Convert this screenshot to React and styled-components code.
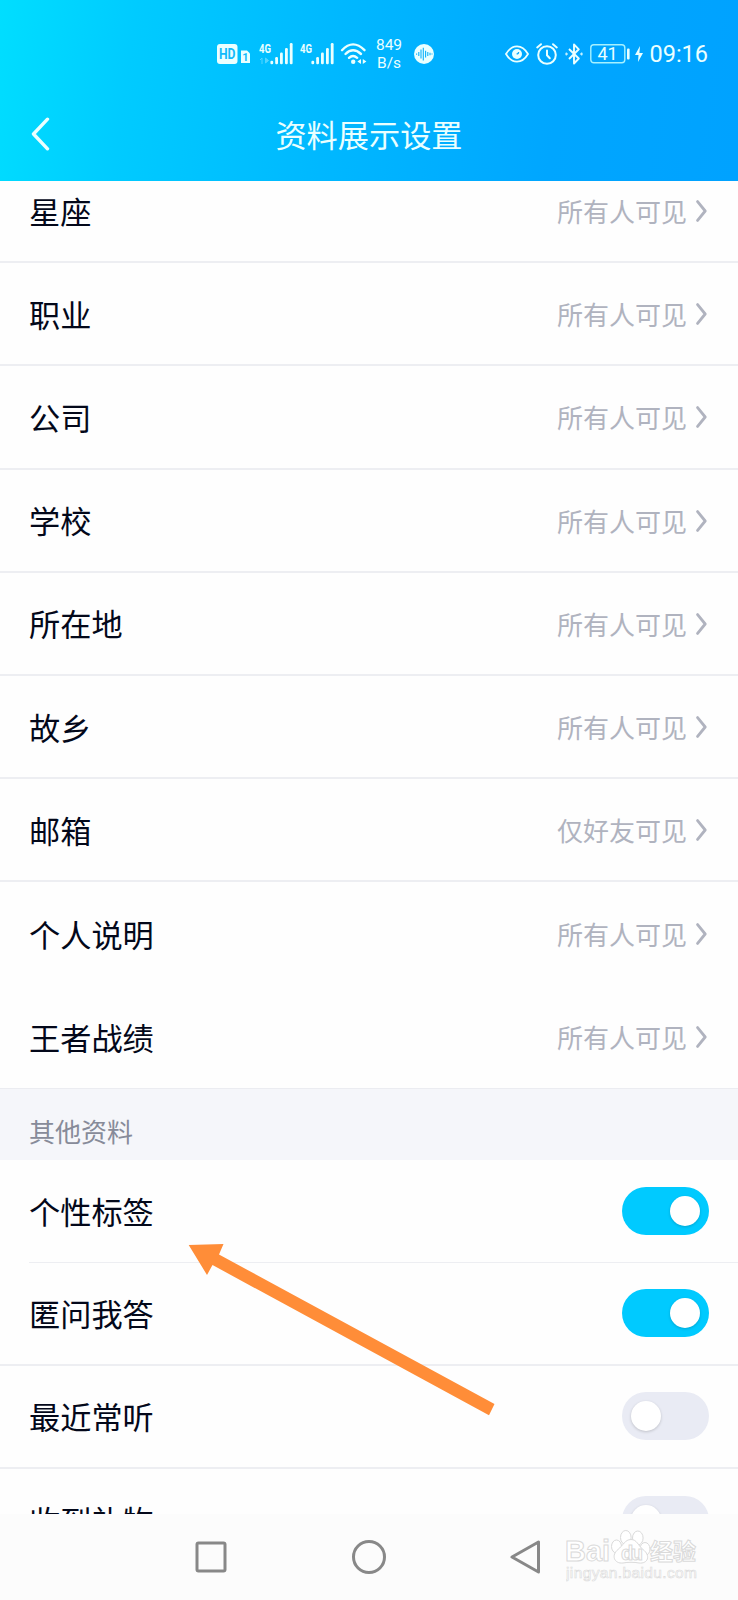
import styled, { createGlobalStyle } from "styled-components"

const GlobalStyle = createGlobalStyle`
*{
    box-sizing:border-box;
}
body{
    margin:0;
    background-color:#FEFEFE;
    font-family: "Noto Sans CJK SC", sans-serif;
}
`

const Screen = styled.div`
position:relative;
display:flex;
flex-direction:column;
width:738px;
height:1600px;
overflow:hidden;
`

const Header = styled.header`
flex:none;
height:180.5px;
color:#EAFFFF;
background: linear-gradient(98deg, #00DEFF 0%, #00CBFF 18%, #00B8FF 45%, #00A6FF 75%, #00A2FF 100%);
`

const StatusBar = styled.div`
display:flex;
justify-content:space-between;
align-items:center;
height:107px;
padding:0 30px 0 217px;
font-family: Roboto, sans-serif;
`

const StatusGroup = styled.div`
display:flex;
align-items:center;
gap:${({ $gap }) => $gap || 0}px;
& svg{
    display:block;
    overflow:visible;
}
`

const Speed = styled.div`
width:28px;
margin:0 11px 0 8px;
font-size:15.5px;
line-height:18px;
text-align:center;
`

const Clock = styled.span`
margin-left:-2px;
font-size:23.5px;
line-height:28px;
`

const TitleBar = styled.div`
display:grid;
grid-template-columns:90px 1fr 90px;
align-items:center;
height:54px;
`

const BackButton = styled.button`
display:flex;
padding:0 0 0 30px;
border:none;
background:none;
color:inherit;
`

const Title = styled.h1`
margin:0;
font-size:31.2px;
font-weight:400;
line-height:46px;
text-align:center;
`

const List = styled.main`
flex:1;
min-height:0;
overflow:hidden;
`

const Scrolled = styled.div`
margin-top:-20.5px;
`

const Row = styled.div`
display:flex;
justify-content:space-between;
align-items:center;
height:${({ $h }) => $h || 103.2}px;
margin-left:${({ $inset }) => ($inset ? 29 : 0)}px;
padding:0 29px 0 ${({ $inset }) => ($inset ? 0 : 29)}px;
border-bottom:${({ $line }) => $line || 0}px solid #EDEEF2;
`

const Label = styled.span`
font-size:31.2px;
line-height:46px;
color:#03081A;
`

const Value = styled.span`
display:flex;
align-items:center;
gap:9px;
padding:1px 2px 0 0;
font-size:26px;
line-height:38px;
color:#B0B3BF;
`

const SectionTitle = styled.h2`
margin:0;
height:72px;
padding:23px 29px 0;
font-size:26px;
font-weight:400;
line-height:38px;
color:#878B99;
background-color:#F5F6FA;
border-top:1px solid #EBECF1;
`

const Switch = styled.span`
display:flex;
justify-content:${({ $on }) => ($on ? "flex-end" : "flex-start")};
align-items:center;
width:87px;
height:48px;
padding:0 9px;
border-radius:24px;
background-color:${({ $on }) => ($on ? "#00CAFF" : "#E9EBF4")};
`

const Knob = styled.span`
width:30px;
height:30px;
border-radius:50%;
background-color:#FFFFFF;
box-shadow:0 1px 3px rgb(0 0 0 / 18%);
`

const NavBar = styled.nav`
display:flex;
flex:none;
align-items:center;
gap:123px;
height:86px;
padding:0 0 0 194px;
background-color:#FCFCFC;
`

const Arrow = styled.svg`
position:absolute;
left:188px;
top:1243px;
`

const Watermark = styled.div`
position:absolute;
left:566px;
top:1519px;
`

const items = [
    { name: "星座", value: "所有人可见", line: 2 },
    { name: "职业", value: "所有人可见", line: 2 },
    { name: "公司", value: "所有人可见", line: 2 },
    { name: "学校", value: "所有人可见", line: 2 },
    { name: "所在地", value: "所有人可见", line: 2 },
    { name: "故乡", value: "所有人可见", line: 2 },
    { name: "邮箱", value: "仅好友可见", line: 2 },
    { name: "个人说明", value: "所有人可见" },
    { name: "王者战绩", value: "所有人可见", h: 102 },
]

const switches = [
    { name: "个性标签", on: true, line: 1, inset: true },
    { name: "匿问我答", on: true, line: 2 },
    { name: "最近常听", on: false, line: 2 },
    { name: "收到礼物", on: false },
]

const Chevron = () => (
    <svg width="11" height="22" viewBox="0 0 11 22" fill="none" stroke="#B0B3BF" strokeWidth="2.8">
        <path d="M1.6 1.6 9.2 11 1.6 20.4" strokeLinecap="round" strokeLinejoin="round" />
    </svg>
)

const HdIcon = () => (
    <svg width="42" height="22" viewBox="0 0 42 22">
        <rect x="0" y="1" width="20.5" height="20" rx="3" fill="#EAFFFF" />
        <text x="10.2" y="16.2" textAnchor="middle" fontSize="14" fontWeight="700" textLength="16.5" lengthAdjust="spacingAndGlyphs" fill="#12BAFB">HD</text>
        <path d="M24 7.5h6l3 3V20h-9z" fill="#EAFFFF" />
        <text x="28.4" y="17.8" textAnchor="middle" fontSize="11" fontWeight="700" fill="#12BAFB">1</text>
    </svg>
)

const Signal = ({ data }) => (
    <svg width="41" height="22" viewBox="0 0 41 22" fill="#EAFFFF">
        <text x="0" y="10.4" fontSize="13" fontWeight="700" textLength="12" lengthAdjust="spacingAndGlyphs">4G</text>
        {data && <path d="M3 15v6M1 17l2-2M6.5 15v5l3-2.5z" stroke="#EAFFFF" opacity=".35" />}
        <rect x="11.4" y="17.8" width="2.8" height="3.4" rx="1.2" />
        <rect x="16.2" y="14" width="2.8" height="7.2" rx="1.2" />
        <rect x="21" y="9.5" width="2.8" height="11.7" rx="1.2" />
        <rect x="26" y="5" width="2.8" height="16.2" rx="1.2" />
        <rect x="30.8" y="0" width="2.8" height="21.2" rx="1.2" />
    </svg>
)

const Wifi = () => (
    <svg width="26" height="22" viewBox="0 0 26 22" fill="none" stroke="#EAFFFF" strokeWidth="2.4" strokeLinecap="round">
        <path d="M1 7.2Q12-4.5 23.500 7.2M4.500 11Q12 3.500 20 11M8 14.8Q12 11 16.200 14.8" />
        <circle cx="12.2" cy="18.8" r="2.2" fill="#EAFFFF" stroke="none" />
        <path d="M20 16v5l-3.6-2.5zM21.8 16v5l3.6-2.5z" fill="#EAFFFF" stroke="none" />
    </svg>
)

const Voice = () => (
    <svg width="20" height="20" viewBox="0 0 20 20">
        <circle cx="10" cy="10" r="10" fill="#EAFFFF" />
        <path d="M2.6 9.4v1.4M4.8 8v4M7 5.5v9M9.3 3.8v12.6M11.6 6.8v6.6M13.8 8v4M16 8.8v2.4M18 9.4v1.2" stroke="#0CB1FA" strokeWidth="1.1" />
    </svg>
)

const Eye = () => (
    <svg width="24" height="18" viewBox="0 0 24 18" fill="none" stroke="#EAFFFF" strokeWidth="1.8">
        <path d="M1 9Q5.5 1.4 12 1.4T23 9Q18.5 16.6 12 16.6T1 9z" />
        <circle cx="12" cy="9" r="5" fill="#EAFFFF" stroke="none" />
        <path d="M11.6 8.9a2 2 0 0 0 2-2" stroke="#09AAFF" strokeWidth="1.2" />
    </svg>
)

const Alarm = () => (
    <svg width="22" height="22" viewBox="0 0 22 22" fill="none" stroke="#EAFFFF" strokeWidth="2" strokeLinecap="round">
        <circle cx="11" cy="12" r="8.8" />
        <path d="M11 7.5V12.3l2.8 3M1.2 4.4 5 1.2M20.8 4.4 17 1.2" />
    </svg>
)

const Bluetooth = () => (
    <svg width="18" height="22" viewBox="0 0 18 22" fill="none" stroke="#EAFFFF" strokeWidth="1.9" strokeLinejoin="round">
        <path d="M4 6 13.8 15.5 9 20.5V1.5L13.8 6.3 4 16" />
        <path d="M1 9.8 2.6 11 1 12.2zM17 9.8 15.4 11 17 12.2z" strokeWidth="1" />
    </svg>
)

const Battery = () => (
    <svg width="54" height="22" viewBox="0 0 54 22">
        <rect x="0.8" y="1.8" width="34" height="18" rx="3" fill="none" stroke="#A6F1FF" strokeWidth="1.4" />
        <text x="17.6" y="17.2" textAnchor="middle" fontSize="18" fill="#EAFFFF">41</text>
        <rect x="37" y="5.5" width="2.6" height="11" rx="1" fill="#EAFFFF" />
        <path d="M50 3 45 12h3.5L48 19l5-9h-3.6z" fill="#EAFFFF" />
    </svg>
)

const App = () => {

    return (

        <Screen>
            <GlobalStyle />

            <Header>
                <StatusBar>
                    <StatusGroup>
                        <HdIcon />
                        <Signal data />
                        <Signal />
                        <Wifi />
                        <Speed>849<br />B/s</Speed>
                        <Voice />
                    </StatusGroup>
                    <StatusGroup $gap={7}>
                        <Eye />
                        <Alarm />
                        <Bluetooth />
                        <Battery />
                        <Clock>09:16</Clock>
                    </StatusGroup>
                </StatusBar>

                <TitleBar>
                    <BackButton>
                        <svg width="20" height="34" viewBox="0 0 20 34" fill="none" stroke="#EAFFFF" strokeWidth="3.4">
                            <path d="M17.5 2.2 3.5 17l14 14.8" strokeLinecap="round" strokeLinejoin="round" />
                        </svg>
                    </BackButton>
                    <Title>资料展示设置</Title>
                </TitleBar>
            </Header>

            <List>
                <Scrolled>
                    {items.map(({ name, value, line, h }) => (
                        <Row key={name} $line={line} $h={h}>
                            <Label>{name}</Label>
                            <Value>{value}<Chevron /></Value>
                        </Row>
                    ))}

                    <SectionTitle>其他资料</SectionTitle>

                    {switches.map(({ name, on, line, inset }) => (
                        <Row key={name} $h={103} $line={line} $inset={inset}>
                            <Label>{name}</Label>
                            <Switch $on={on}><Knob /></Switch>
                        </Row>
                    ))}
                </Scrolled>
            </List>

            <NavBar>
                <svg width="34" height="36" viewBox="0 0 34 36" fill="none" stroke="#888888" strokeWidth="3">
                    <rect x="3" y="4" width="28" height="28" rx="1.5" />
                </svg>
                <svg width="36" height="36" viewBox="0 0 36 36" fill="none" stroke="#888888" strokeWidth="3">
                    <circle cx="18" cy="18" r="15.5" />
                </svg>
                <svg width="34" height="36" viewBox="0 0 34 36" fill="none" stroke="#888888" strokeWidth="3" strokeLinejoin="round">
                    <path d="M28.500 3v30L2 18z" />
                </svg>
            </NavBar>

            <Arrow width="308" height="174" viewBox="188 1243 308 174">
                <path d="M188.7 1245 223.5 1244 219 1254.5 494.5 1404 489 1415.3 212.5 1265 207 1275z" fill="#FF8D38" />
            </Arrow>

            <Watermark>
                <svg width="140" height="66" viewBox="0 0 140 66" fill="#FFFFFF" stroke="#DADADA" strokeWidth="1">
                    <text x="-1" y="42" fontFamily="Liberation Sans" fontSize="29" fontWeight="700" textLength="45" lengthAdjust="spacingAndGlyphs">Bai</text>
                    <ellipse cx="50.5" cy="27.5" rx="5" ry="6.5" />
                    <ellipse cx="59.8" cy="18.5" rx="5.3" ry="7" />
                    <ellipse cx="71.8" cy="19" rx="5.3" ry="7" />
                    <ellipse cx="79" cy="30" rx="5" ry="6.5" />
                    <path d="M65 28.500c6 0 7 6 12 10 8 6 5 14.500-4 13.500-5-1-11-1-16 0-9 1-12-8-5-13.500 5-4 7-10 13-10z" transform="translate(0 -8)" />
                    <text x="55" y="41" fontFamily="Liberation Sans" fontSize="20" fontWeight="700" textLength="22">du</text>
                    <text x="84" y="41" fontFamily="Noto Sans CJK SC" fontSize="23" fontWeight="700">经验</text>
                    <text x="0" y="59" fontFamily="Liberation Sans" fontSize="15.5" strokeWidth="0.6" textLength="131">jingyan.baidu.com</text>
                </svg>
            </Watermark>
        </Screen>

    )
}

export default App
